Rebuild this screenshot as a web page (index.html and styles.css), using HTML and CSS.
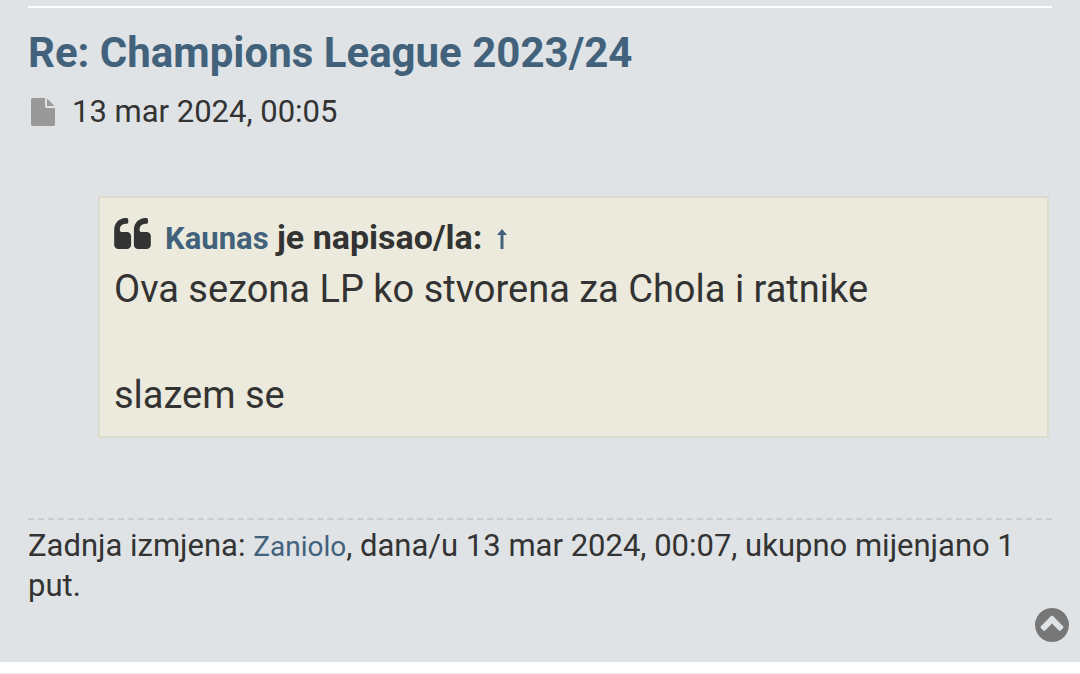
FILE: index.html
```
<!DOCTYPE html>
<html lang="hr">
<head>
  <meta charset="UTF-8" />
  <meta name="viewport" content="width=device-width, initial-scale=1.0"/>
  <title>Re: Champions League 2023/24</title>
  <link rel="stylesheet" href="styles.css">
</head>
<body>
  <main class="post">
    <hr class="divider">

    <h1><a href="#post">Re: Champions League 2023/24</a></h1>

    <p class="author">
      <a href="#post" aria-label="Post"><svg class="icon-file" viewBox="128 0 1536 1792"><path d="M1152 512v-472q22 14 36 28l408 408q14 14 28 36h-472zm-128 32q0 40 28 68t68 28h544v1056q0 40-28 68t-68 28h-1344q-40 0-68-28t-28-68v-1600q0-40 28-68t68-28h800v544z"/></svg></a>
      <time>13 mar 2024, 00:05</time>
    </p>

    <blockquote>
      <div class="cite">
        <svg class="icon-quote" viewBox="64 128 1664 1408"><path d="M832 960v384q0 80-56 136t-136 56h-384q-80 0-136-56t-56-136v-704q0-104 40.500-198.500t109.500-163.500 163.500-109.500 198.500-40.500h64q26 0 45 19t19 45v128q0 26-19 45t-45 19h-64q-106 0-181 75t-75 181v32q0 40 28 68t68 28h224q80 0 136 56t56 136zm896 0v384q0 80-56 136t-136 56h-384q-80 0-136-56t-56-136v-704q0-104 40.500-198.500t109.500-163.500 163.500-109.500 198.500-40.500h64q26 0 45 19t19 45v128q0 26-19 45t-45 19h-64q-106 0-181 75t-75 181v32q0 40 28 68t68 28h224q80 0 136 56t56 136z"/></svg>
        <cite><a href="#user">Kaunas</a> je napisao/la: <a class="jump" href="#quoted" aria-label="Quoted post"><svg class="icon-arrow" viewBox="0 0 10 20"><path d="M5 0l5 6H6.500v14h-3V6H0z"/></svg></a></cite>
      </div>
      <p>Ova sezona LP ko stvorena za Chola i ratnike</p>
      <p>slazem se</p>
    </blockquote>

    <div class="notice">
      Zadnja izmjena: <a href="#editor">Zaniolo</a>, dana/u 13 mar 2024, 00:07, ukupno mijenjano 1 put.
    </div>

    <a class="top" href="#top" aria-label="Top"><svg class="icon-top" viewBox="128 128 1536 1536"><path d="M1293 1139l102-102q19-19 19-45t-19-45l-454-454q-19-19-45-19t-45 19l-454 454q-19 19-19 45t19 45l102 102q19 19 45 19t45-19l307-307 307 307q19 19 45 19t45-19zm371-243q0 209-103 385.500t-279.500 279.500-385.500 103-385.500-103-279.500-279.500-103-385.500 103-385.500 279.500-279.500 385.500-103 385.500 103 279.500 279.500 103 385.500z"/></svg></a>
  </main>
  <footer class="next"></footer>
</body>
</html>
```
FILE: styles.css
```
body {
  margin: 0;
  background: #fff;
  color: #333;
  font-family: Roboto, sans-serif;
  font-size: 31px;
  line-height: 40px;
}

a {
  color: #42627c;
  text-decoration: none;
}

svg {
  display: block;
  fill: currentColor;
}

.post {
  display: flow-root;
  padding: 6px 28px 20px;
  background: #dfe3e6;
}

.divider {
  margin: 0;
  border: none;
  border-top: 2px solid #fff;
}

h1 {
  margin: 20px 0 0;
  font-size: 42px;
  line-height: 50px;
}

.author {
  display: flex;
  align-items: center;
  gap: 17px;
  margin: 14px 0 64px;
  padding-left: 3px;
}

.icon-file {
  width: 24px;
  height: 28px;
  fill: #999;
}

blockquote {
  margin: 0 3px 80px 70px;
  padding: 14px;
  border: 2px solid #dbdbce;
  background: #ebeadd;
}

.cite {
  display: flex;
  align-items: flex-start;
  gap: 14px;
  font-size: 34px;
  font-weight: bold;
  line-height: 51px;
}

.cite a {
  font-size: 31px;
  line-height: 40px;
}

cite {
  font-style: normal;
}

.icon-quote {
  width: 37px;
  height: 31px;
  margin-top: 6px;
}

.jump {
  display: inline-block;
  margin-left: 6px;
}

.icon-arrow {
  width: 10px;
  height: 20px;
}

blockquote p {
  margin: 0;
  font-size: 38px;
  line-height: 53px;
}

blockquote p + p {
  margin-top: 53px;
}

.notice {
  padding-top: 6px;
  border-top: 2px dashed #ccc;
}

.notice a {
  font-size: 28px;
  line-height: 32px;
}

.top {
  float: right;
  margin: 2px -17px 0 0;
}

.icon-top {
  width: 34px;
  height: 34px;
  fill: #777;
}

.next {
  height: 11px;
  border-bottom: 1px solid #eee;
}
```
